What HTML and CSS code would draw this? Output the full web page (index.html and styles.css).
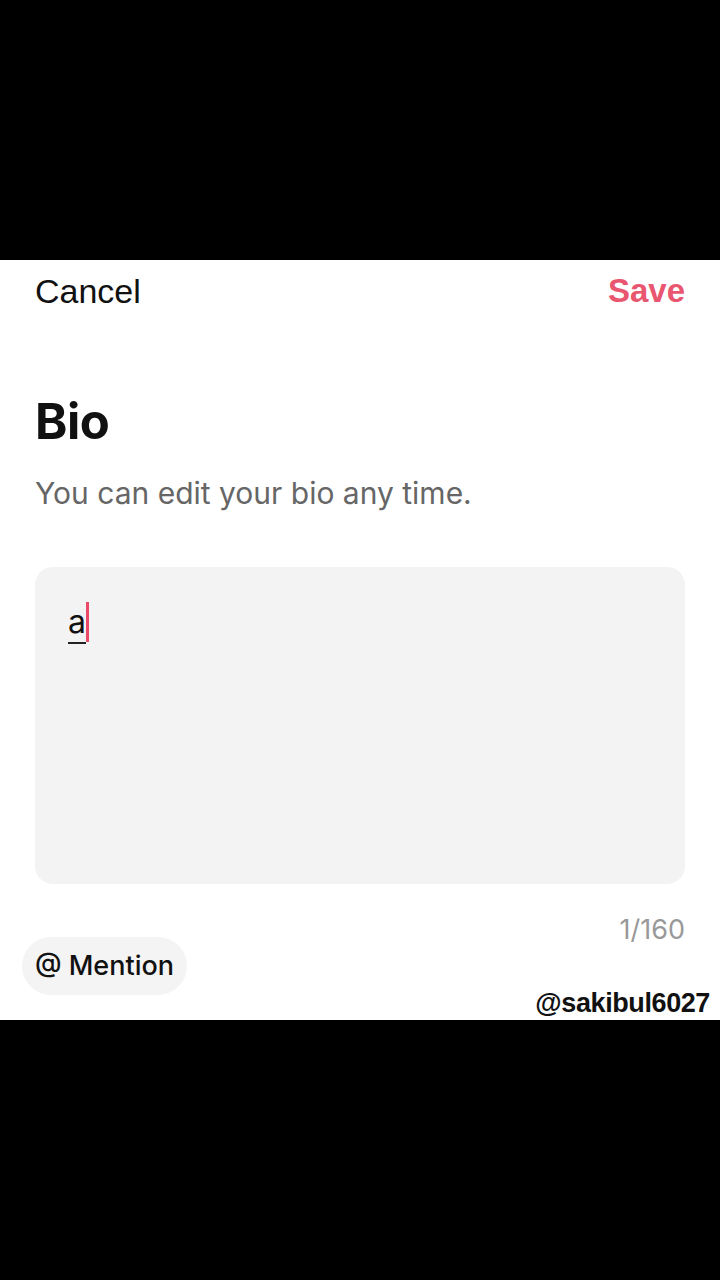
FILE: index.html
```html
<!DOCTYPE html>
<html lang="en">

<head>
    <meta charset="UTF-8" />
    <meta name="viewport" content="width=device-width, initial-scale=1.0" />
    <title>Bio</title>
    <link rel="stylesheet" href="styles.css">
</head>

<body>
    <div class="bar"></div>

    <main class="sheet">
        <header class="nav">
            <span class="cancel">Cancel</span>
            <span class="save">Save</span>
        </header>

        <h1>Bio</h1>
        <p class="hint">You can edit your bio any time.</p>

        <div class="field">
            <span class="typed">a</span><span class="caret"></span>
        </div>

        <div class="count">1/160</div>

        <div class="tools">
            <span class="mention">@ Mention</span>
        </div>

        <div class="mark">@sakibul6027</div>
    </main>

    <div class="bar"></div>
</body>

</html>
```

FILE: styles.css
```css
body {
    margin: 0;
    background: #000;
    font-family: "Liberation Sans", Arial, sans-serif;
    color: #111;
}

.bar {
    height: 260px;
    background: #000;
}

.sheet {
    background: #fff;
    height: 760px;
    overflow: hidden;
    padding: 0 35px;
    box-sizing: border-box;
}

.nav {
    display: flex;
    justify-content: space-between;
    align-items: center;
    height: 62px;
    font-size: 34px;
}

.cancel {
    color: #111;
}

.save {
    color: #e9566f;
    font-weight: bold;
    font-size: 33px;
}

h1 {
    font-family: "Inter", sans-serif;
    font-size: 49px;
    font-weight: 700;
    margin: 73px 0 0;
    line-height: 54px;
    letter-spacing: -0.5px;
}

.hint {
    font-family: "Inter", sans-serif;
    color: #666;
    font-size: 30px;
    margin: 26px 0 0;
    line-height: 36px;
}

.field {
    background: #f3f3f3;
    border-radius: 18px;
    height: 317px;
    margin-top: 56px;
    padding: 35px 33px 0;
    box-sizing: border-box;
    display: flex;
    align-items: flex-start;
}

.typed {
    font-family: "Inter", sans-serif;
    font-size: 32px;
    line-height: 40px;
    border-bottom: 2px solid #222;
    color: #111;
}

.caret {
    width: 3px;
    height: 40px;
    background: #ea4a68;
}

.count {
    text-align: right;
    color: #999;
    font-family: "Inter", sans-serif;
    font-size: 27px;
    margin-top: 31px;
    line-height: 30px;
}

.tools {
    margin: -8px 0 0 -13px;
}

.mention {
    display: inline-block;
    background: #f4f4f4;
    border-radius: 29px;
    padding: 0 13px;
    height: 58px;
    line-height: 58px;
    font-size: 27px;
    font-family: "Inter", sans-serif;
    font-weight: 500;
}

.mark {
    text-align: right;
    margin: -6px -25px 0 0;
    font-family: "Liberation Sans", Arial, sans-serif;
    font-weight: 700;
    font-size: 27px;
    line-height: 28px;
    letter-spacing: -0.4px;
}
```
